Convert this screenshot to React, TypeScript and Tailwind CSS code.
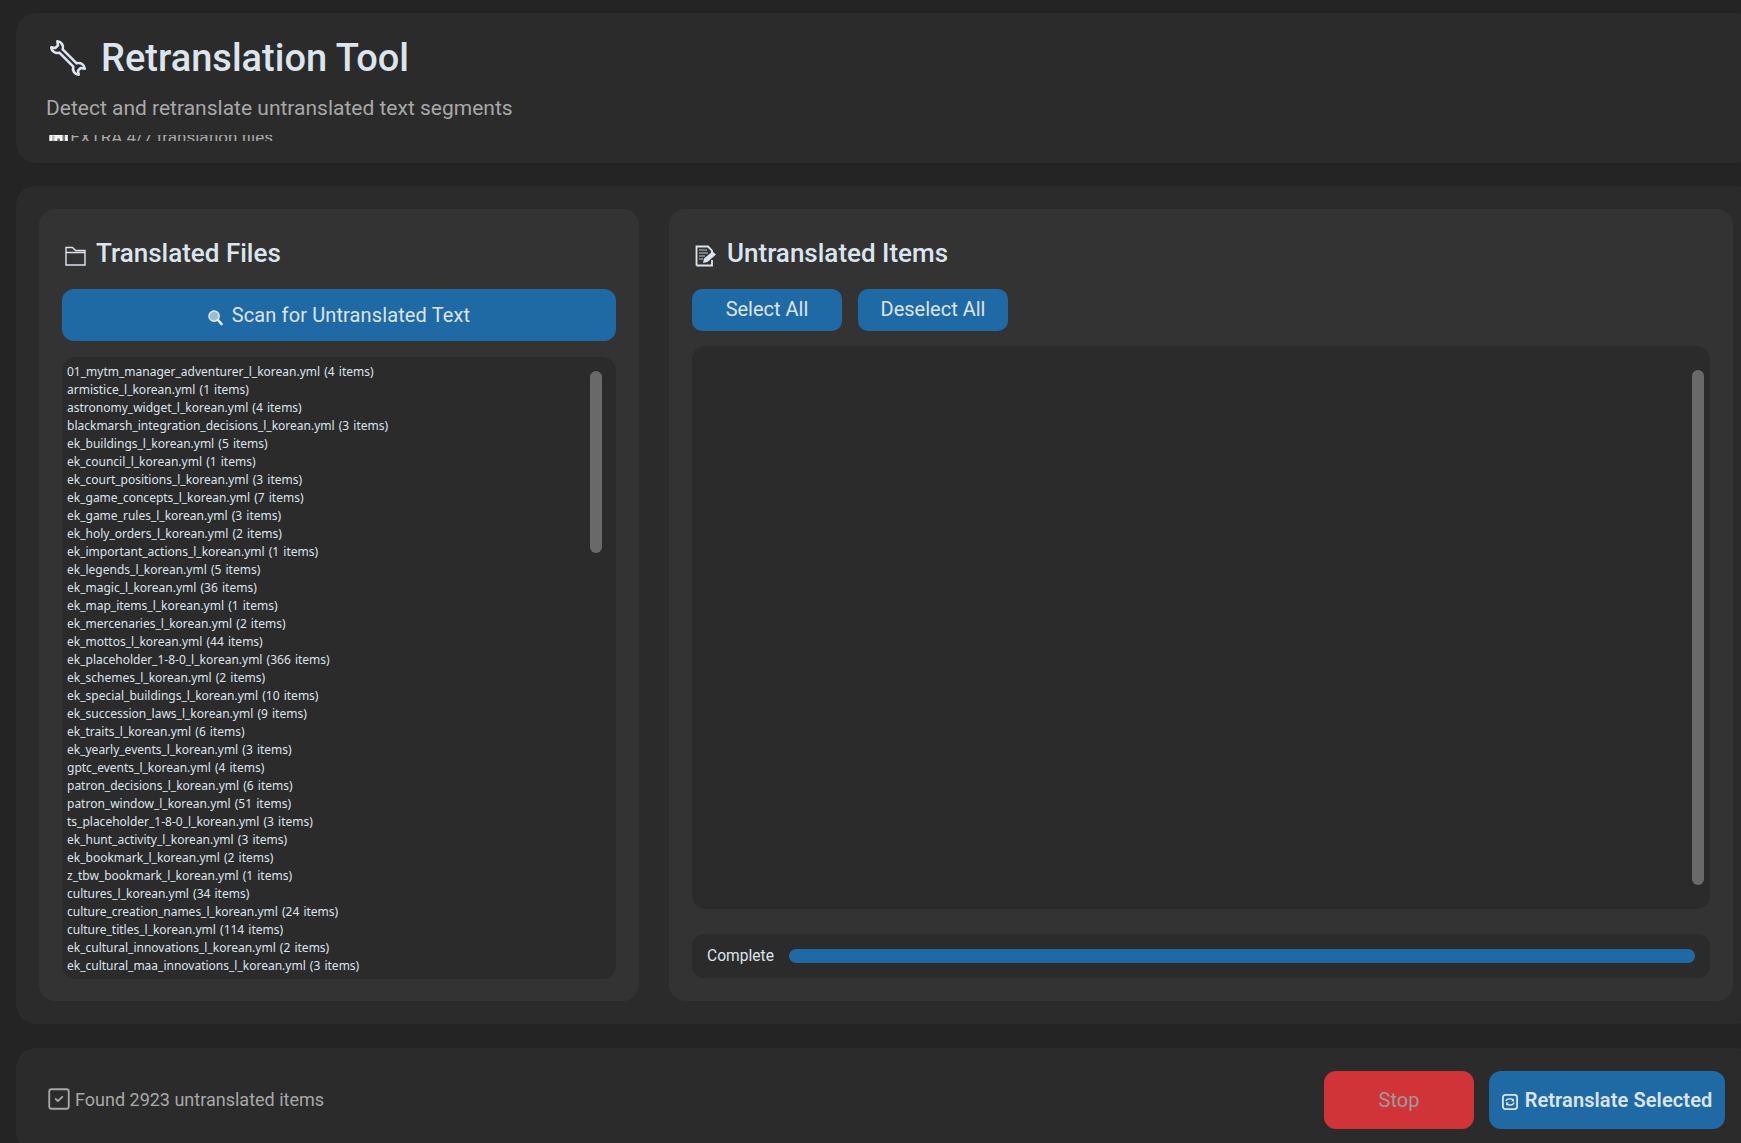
import { SquareCheck } from 'lucide-react'

const files = [
  '01_mytm_manager_adventurer_l_korean.yml (4 items)',
  'armistice_l_korean.yml (1 items)',
  'astronomy_widget_l_korean.yml (4 items)',
  'blackmarsh_integration_decisions_l_korean.yml (3 items)',
  'ek_buildings_l_korean.yml (5 items)',
  'ek_council_l_korean.yml (1 items)',
  'ek_court_positions_l_korean.yml (3 items)',
  'ek_game_concepts_l_korean.yml (7 items)',
  'ek_game_rules_l_korean.yml (3 items)',
  'ek_holy_orders_l_korean.yml (2 items)',
  'ek_important_actions_l_korean.yml (1 items)',
  'ek_legends_l_korean.yml (5 items)',
  'ek_magic_l_korean.yml (36 items)',
  'ek_map_items_l_korean.yml (1 items)',
  'ek_mercenaries_l_korean.yml (2 items)',
  'ek_mottos_l_korean.yml (44 items)',
  'ek_placeholder_1-8-0_l_korean.yml (366 items)',
  'ek_schemes_l_korean.yml (2 items)',
  'ek_special_buildings_l_korean.yml (10 items)',
  'ek_succession_laws_l_korean.yml (9 items)',
  'ek_traits_l_korean.yml (6 items)',
  'ek_yearly_events_l_korean.yml (3 items)',
  'gptc_events_l_korean.yml (4 items)',
  'patron_decisions_l_korean.yml (6 items)',
  'patron_window_l_korean.yml (51 items)',
  'ts_placeholder_1-8-0_l_korean.yml (3 items)',
  'ek_hunt_activity_l_korean.yml (3 items)',
  'ek_bookmark_l_korean.yml (2 items)',
  'z_tbw_bookmark_l_korean.yml (1 items)',
  'cultures_l_korean.yml (34 items)',
  'culture_creation_names_l_korean.yml (24 items)',
  'culture_titles_l_korean.yml (114 items)',
  'ek_cultural_innovations_l_korean.yml (2 items)',
  'ek_cultural_maa_innovations_l_korean.yml (3 items)',
]

function WrenchIcon() {
  return (
    <svg width="32" height="32" viewBox="0 0 34 34" fill="none" className="overflow-visible shrink-0">
      <path
        transform="rotate(45 17 17)"
        d="M27.5 14.5A6.5 6.5 0 0 1 37.6 12.4L34 15V19L37.6 21.6A6.5 6.5 0 0 1 27.5 19.5H6.5A6.5 6.5 0 0 1-3.6 21.6L0 19V15L-3.6 12.4A6.5 6.5 0 0 1 6.5 14.5Z"
        stroke="#dce4ee"
        strokeWidth="2.8"
        strokeLinejoin="round"
      />
    </svg>
  )
}

function FolderIcon() {
  return (
    <svg width="21" height="20" viewBox="0 0 21 20" fill="none" className="mt-[5px] shrink-0">
      <path d="M1 19V1.5H7.5L10.5 4.5H20V19ZM1 6.5H20" stroke="#dce4ee" strokeWidth="1.4" />
    </svg>
  )
}

function MemoIcon() {
  return (
    <svg width="22" height="22" viewBox="0 0 22 22" fill="none" className="mt-[5px] shrink-0">
      <path d="M1.5 20.5V1.5H13L17 5.5V8M17 15V20.5H1.5" stroke="#dce4ee" strokeWidth="1.8" />
      <path d="M4 5H12M4 8H13M4 11H10M4 14H8" stroke="#8f959c" strokeWidth="1.3" />
      <path d="M8 18L9 13.5L17.5 6.5L21 9.5L12.5 17Z" fill="#dce4ee" />
    </svg>
  )
}

function SearchIcon() {
  return (
    <svg width="15" height="16" viewBox="0 0 16 17" fill="none" className="mt-[5px] shrink-0">
      <circle cx="6.5" cy="6.5" r="5.5" fill="#9dbbd8" stroke="#e4ecf4" strokeWidth="1.5" />
      <path d="M10.5 10.5L14.5 15" stroke="#e8eef5" strokeWidth="2.6" strokeLinecap="round" />
    </svg>
  )
}

function SyncIcon() {
  return (
    <svg width="16" height="16" viewBox="0 0 16 16" fill="none" className="mt-[4px] shrink-0">
      <rect x="0.9" y="0.9" width="14.2" height="14.2" rx="2.5" stroke="#dce4ee" strokeWidth="1.8" />
      <path d="M4 7C4.5 4.5 9.5 4 11.5 6.5M12 8.5C11.5 11.5 6.5 12 4.5 9.5" stroke="#dce4ee" strokeWidth="1.5" />
      <path d="M12 4.5V7.5H9M4 11.5V8.5H7" fill="#dce4ee" />
    </svg>
  )
}

export default function App() {
  return (
    <div className="h-[1143px] w-full overflow-hidden bg-[#242424] pt-[13px] pl-4 font-['Roboto',sans-serif] text-[#dce4ee]">
      <div className="flex w-[1740px] flex-col gap-[23px]">
        <header className="h-[150px] overflow-hidden rounded-[20px] bg-[#2b2b2b] pt-[21px] pl-[30px]">
          <div className="flex h-[48px] items-center gap-[17px] pl-[6px]">
            <WrenchIcon />
            <h1 className="text-[38px] leading-[48px] font-medium">Retranslation Tool</h1>
          </div>
          <p className="mt-[14px] text-[21px] leading-6 text-[#a8a8a8]">Detect and retranslate untranslated text segments</p>
          <div className="mt-[15px] h-[6px] overflow-hidden">
            <p className="-mt-[8px] pl-[2px] text-[17px] leading-5 text-[#a8a8a8]">
              <span className="grayscale">📊</span> <span className="-ml-[3px]">EXTRA 4/7 translation files</span>
            </p>
          </div>
        </header>

        <main className="flex h-[838px] gap-[30px] rounded-[20px] bg-[#2b2b2b] p-[23px]">
          <section className="flex w-[600px] flex-col rounded-[16px] bg-[#333333] px-[23px] pt-[28px] pb-[22px]">
            <div className="mb-[20px] flex h-[32px] items-center gap-[10px] pl-[3px]">
              <FolderIcon />
              <h2 className="text-[26px] leading-8 font-medium">Translated Files</h2>
            </div>
            <button className="mb-[16px] flex h-[52px] items-center justify-center gap-[9px] rounded-[12px] bg-[#1f6aa5] text-[20px] tracking-[0.12px]">
              <SearchIcon />
              Scan for Untranslated Text
            </button>
            <div className="relative min-h-0 flex-1 overflow-hidden rounded-[14px] bg-[#2b2b2b] pt-[6px] pl-[5px] font-['Noto_Sans',sans-serif] text-[12px] leading-[18px] [word-spacing:1px]">
              {files.map((f) => (
                <div key={f}>{f}</div>
              ))}
              <div className="absolute top-[14px] right-[14px] h-[182px] w-3 rounded-md bg-[#696969]" />
            </div>
          </section>

          <section className="flex w-[1064px] flex-col rounded-[16px] bg-[#333333] px-[23px] pt-[28px] pb-[23px]">
            <div className="mb-[20px] flex h-[32px] items-center gap-[10px] pl-[3px]">
              <MemoIcon />
              <h2 className="text-[26px] leading-8 font-medium">Untranslated Items</h2>
            </div>
            <div className="mb-[15px] flex gap-4">
              <button className="h-[42px] w-[150px] rounded-[10px] bg-[#1f6aa5] pb-[3px] text-[20px]">Select All</button>
              <button className="h-[42px] w-[150px] rounded-[10px] bg-[#1f6aa5] pb-[3px] text-[20px]">Deselect All</button>
            </div>
            <div className="relative mb-[25px] flex-1 rounded-[14px] bg-[#2b2b2b]">
              <div className="absolute top-[24px] right-[6px] h-[515px] w-3 rounded-md bg-[#696969]" />
            </div>
            <div className="flex h-[44px] items-center rounded-[12px] bg-[#2b2b2b] px-[15px]">
              <span className="w-[82px] text-[15.6px] leading-5">Complete</span>
              <div className="h-[14px] flex-1 rounded-[7px] bg-[#1f6aa5]" />
            </div>
          </section>
        </main>

        <footer className="mt-px flex h-[104px] items-center justify-between rounded-[20px] bg-[#2b2b2b] pr-[31px] pl-[30px]">
          <div className="flex items-center gap-[3px] pb-[2px] text-[18px] text-[#a8a8a8]">
            <SquareCheck size={26} strokeWidth={1.7} />
            Found 2923 untranslated items
          </div>
          <div className="flex gap-[15px]">
            <button className="h-[58px] w-[150px] rounded-[12px] bg-[#d13438] text-[20px] text-[#a09a9a]">Stop</button>
            <button className="flex h-[58px] w-[236px] items-center justify-center gap-[7px] rounded-[12px] bg-[#1f6aa5] text-[20px] font-semibold tracking-[0.1px]">
              <SyncIcon />
              Retranslate Selected
            </button>
          </div>
        </footer>
      </div>
    </div>
  )
}
